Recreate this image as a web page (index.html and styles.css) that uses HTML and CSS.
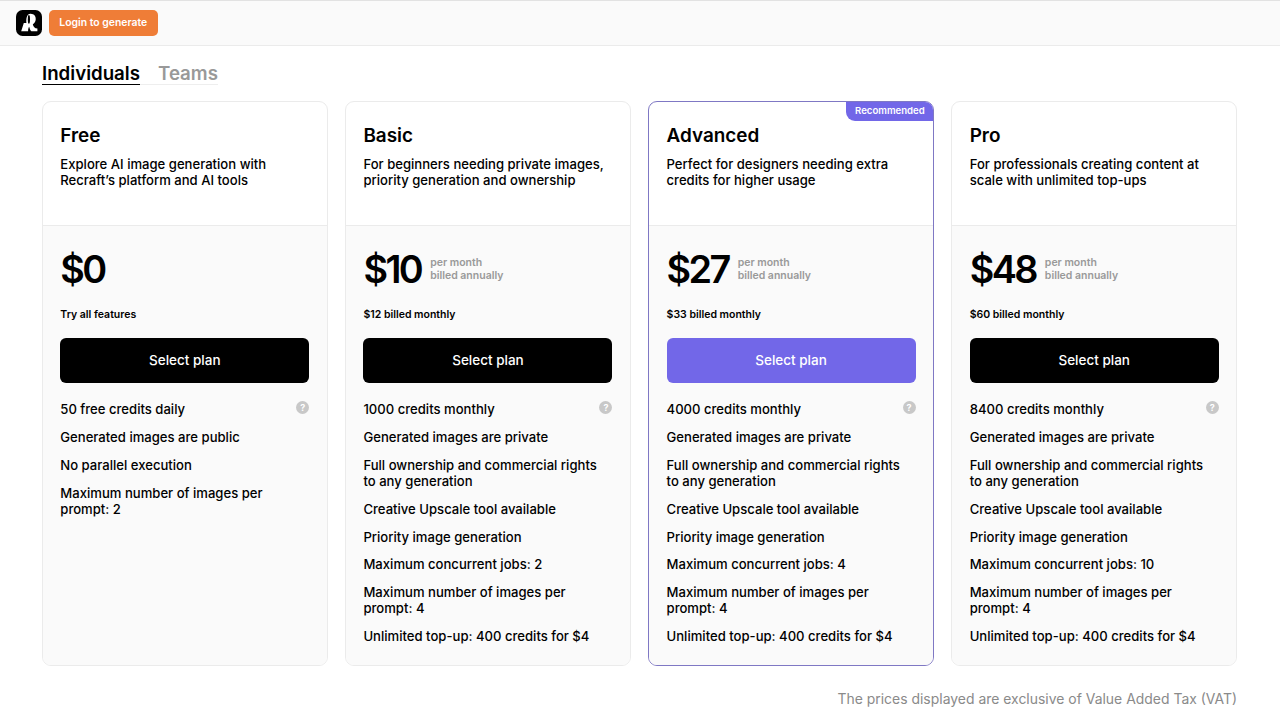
FILE: index.html
```html
<!DOCTYPE html>
<html lang="en">
<head>
    <meta charset="UTF-8">
    <meta name="viewport" content="width=device-width, initial-scale=1.0">
    <title>Recraft pricing</title>
    <link rel="stylesheet" href="styles.css">
</head>
<body>

    <header class="header">
        <svg class="logo" viewBox="0 0 26 26">
            <rect width="26" height="26" rx="6.5" fill="#000"/>
            <path fill="#fff" d="M5.2 21.2 L7.8 13 H10.4 C9.9 8.4 11 3.8 14.4 3.7 C18.2 3.6 20.2 6.4 19.7 9.8 C19.4 11.9 18.3 13.4 16.8 14.2 C17.4 16.8 18.6 18.2 21.4 18.6 V21.2 H15.4 C14.2 20.4 13.6 18.6 13.2 16.8 C12.4 17.8 12.1 19.4 12.1 21.2 Z"/>
            <ellipse cx="12.9" cy="9.4" rx="1.1" ry="4.4" fill="#000"/>
        </svg>
        <button class="login">Login to generate</button>
    </header>

    <main class="pricing">
        <nav class="tabs">
            <a class="tab tab-active">Individuals</a>
            <a class="tab">Teams</a>
        </nav>

        <div class="plans">
            <section class="plan">
                <div class="plan-head">
                    <h2>Free</h2>
                    <p>Explore AI image generation with Recraft’s platform and AI tools</p>
                </div>
                <div class="plan-body">
                    <div class="price"><span class="amount">$0</span></div>
                    <div class="billed">Try all features</div>
                    <button class="select">Select plan</button>
                    <ul class="features">
                        <li class="credits">50 free credits daily <span class="help">?</span></li>
                        <li>Generated images are public</li>
                        <li>No parallel execution</li>
                        <li>Maximum number of images per prompt: 2</li>
                    </ul>
                </div>
            </section>

            <section class="plan">
                <div class="plan-head">
                    <h2>Basic</h2>
                    <p>For beginners needing private images, priority generation and ownership</p>
                </div>
                <div class="plan-body">
                    <div class="price"><span class="amount">$10</span><span class="period">per month<br>billed annually</span></div>
                    <div class="billed">$12 billed monthly</div>
                    <button class="select">Select plan</button>
                    <ul class="features">
                        <li class="credits">1000 credits monthly <span class="help">?</span></li>
                        <li>Generated images are private</li>
                        <li>Full ownership and commercial rights to any generation</li>
                        <li>Creative Upscale tool available</li>
                        <li>Priority image generation</li>
                        <li>Maximum concurrent jobs: 2</li>
                        <li>Maximum number of images per prompt: 4</li>
                        <li>Unlimited top-up: 400 credits for $4</li>
                    </ul>
                </div>
            </section>

            <section class="plan plan-recommended">
                <span class="badge">Recommended</span>
                <div class="plan-head">
                    <h2>Advanced</h2>
                    <p>Perfect for designers needing extra credits for higher usage</p>
                </div>
                <div class="plan-body">
                    <div class="price"><span class="amount">$27</span><span class="period">per month<br>billed annually</span></div>
                    <div class="billed">$33 billed monthly</div>
                    <button class="select">Select plan</button>
                    <ul class="features">
                        <li class="credits">4000 credits monthly <span class="help">?</span></li>
                        <li>Generated images are private</li>
                        <li>Full ownership and commercial rights to any generation</li>
                        <li>Creative Upscale tool available</li>
                        <li>Priority image generation</li>
                        <li>Maximum concurrent jobs: 4</li>
                        <li>Maximum number of images per prompt: 4</li>
                        <li>Unlimited top-up: 400 credits for $4</li>
                    </ul>
                </div>
            </section>

            <section class="plan">
                <div class="plan-head">
                    <h2>Pro</h2>
                    <p>For professionals creating content at scale with unlimited top-ups</p>
                </div>
                <div class="plan-body">
                    <div class="price"><span class="amount">$48</span><span class="period">per month<br>billed annually</span></div>
                    <div class="billed">$60 billed monthly</div>
                    <button class="select">Select plan</button>
                    <ul class="features">
                        <li class="credits">8400 credits monthly <span class="help">?</span></li>
                        <li>Generated images are private</li>
                        <li>Full ownership and commercial rights to any generation</li>
                        <li>Creative Upscale tool available</li>
                        <li>Priority image generation</li>
                        <li>Maximum concurrent jobs: 10</li>
                        <li>Maximum number of images per prompt: 4</li>
                        <li>Unlimited top-up: 400 credits for $4</li>
                    </ul>
                </div>
            </section>
        </div>

        <p class="vat">The prices displayed are exclusive of Value Added Tax (VAT)</p>
    </main>

</body>
</html>
```
FILE: styles.css
```css
* {
    box-sizing: border-box;
}
body {
    margin: 0;
    height: 720px;
    overflow: hidden;
    background: #fff;
    color: #000;
    font-family: Inter, sans-serif;
    font-weight: 500;
}
button {
    border: none;
    padding: 0;
    color: #fff;
    font-family: inherit;
}
.header {
    display: flex;
    align-items: center;
    gap: 7px;
    height: 46px;
    padding: 0 16px 1px;
    background: #fafafa;
    border-top: 1px solid #e2e2e2;
    border-bottom: 1px solid #ebebeb;
}
.logo {
    width: 26px;
    height: 26px;
}
.login {
    width: 108.5px;
    height: 26px;
    padding-bottom: 1px;
    border-radius: 5px;
    background: #ef7d37;
    font-size: 10.4px;
    font-weight: 600;
}
.pricing {
    padding: 14px 43px 0 42px;
}
.tabs {
    display: flex;
    width: max-content;
    height: 25px;
    border-bottom: 1px solid #eee;
    gap: 18px;
}
.tab {
    height: 25px;
    line-height: 27px;
    font-size: 18.7px;
    font-weight: 600;
    color: #999;
}
.tab-active {
    color: #000;
    border-bottom: 1px solid #000;
}
.plans {
    display: grid;
    grid-template-columns: repeat(4, 1fr);
    gap: 17.5px;
    height: 565px;
    margin-top: 16px;
}
.plan {
    position: relative;
    display: flex;
    flex-direction: column;
    border: 1px solid #ebebeb;
    border-radius: 9px;
    overflow: hidden;
}
.plan-recommended {
    border-color: #7f78c4;
}
.badge {
    position: absolute;
    top: -1px;
    right: -1px;
    width: 88px;
    height: 20px;
    line-height: 20px;
    border-radius: 0 9px 0 9px;
    background: #7267e8;
    color: #fff;
    font-size: 9.6px;
    font-weight: 600;
    text-align: center;
}
.plan-head {
    height: 124px;
    padding: 22px 17.3px 0;
    border-bottom: 1px solid #ebebeb;
}
.plan-head h2 {
    margin: 0 0 8px;
    font-size: 18.9px;
    line-height: 24px;
    font-weight: 600;
}
.plan-head p {
    margin: 0;
    font-size: 13.1px;
    line-height: 16px;
}
.plan-body {
    flex: 1;
    padding: 18px 17.3px 0;
    background: #fafafa;
}
.price {
    display: flex;
    align-items: center;
    gap: 9px;
    height: 48px;
}
.amount {
    padding-top: 1px;
    font-size: 37.8px;
    font-weight: 600;
    letter-spacing: -2.6px;
}
.period {
    padding-top: 2px;
    font-size: 10.5px;
    line-height: 13px;
    font-weight: 600;
    color: #999;
}
.billed {
    margin-top: 16px;
    font-size: 10.5px;
    line-height: 13px;
    font-weight: 600;
}
.select {
    display: block;
    width: 100%;
    height: 45px;
    margin-top: 17px;
    padding-bottom: 2px;
    border-radius: 6px;
    background: #000;
    font-size: 13.5px;
    font-weight: 500;
}
.plan-recommended .select {
    background: #7267e8;
}
.features {
    margin: 19px 0 0;
    padding: 0;
    list-style: none;
    font-size: 13.1px;
    line-height: 15.9px;
}
.features li {
    margin-bottom: 12px;
    padding-right: 10px;
}
.features .credits {
    display: flex;
    justify-content: space-between;
    padding-right: 0;
}
.help {
    width: 13px;
    height: 13px;
    margin-top: -1px;
    border-radius: 50%;
    background: #c8c8c8;
    color: #fff;
    font-size: 9px;
    line-height: 13px;
    font-weight: 700;
    text-align: center;
}
.vat {
    margin: 23px 0 0;
    font-size: 13.95px;
    line-height: 19px;
    font-weight: 400;
    color: #8a8a8a;
    text-align: right;
}
```
